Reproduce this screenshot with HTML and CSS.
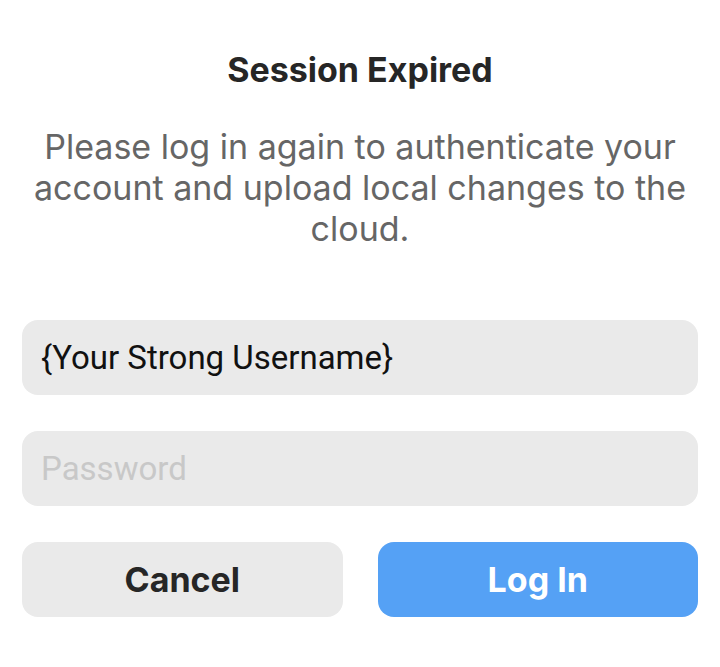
FILE: index.html
```html
<!DOCTYPE html>
<html lang="en">
<head>
    <meta charset="UTF-8">
    <meta name="viewport" content="width=device-width, initial-scale=1.0">
    <title>Session Expired</title>
    <link rel="stylesheet" href="styles.css">
</head>
<body>
    <div class="dialog">
        <h1 class="title">Session Expired</h1>
        <p class="message">Please log in again to authenticate your account and upload local changes to the cloud.</p>

        <form class="login-form">
            <input type="text" class="field" value="{Your Strong Username}">
            <input type="password" class="field" placeholder="Password">

            <div class="actions">
                <button type="button" class="btn btn-cancel">Cancel</button>
                <button type="submit" class="btn btn-login">Log In</button>
            </div>
        </form>
    </div>
</body>
</html>
```

FILE: styles.css
```css
body {
    background-color: #fff;
    margin: 0;
    padding: 0;
    font-family: Inter, "Noto Sans", sans-serif;
}

.dialog {
    padding: 48px 22px 0;
}

.title {
    margin: 0;
    text-align: center;
    font-size: 34px;
    font-weight: 700;
    color: #262626;
    line-height: 44px;
}

.message {
    margin: 34px 0 0;
    text-align: center;
    font-size: 34px;
    line-height: 41px;
    color: #666;
}

.login-form {
    margin-top: 71px;
    display: flex;
    flex-direction: column;
    gap: 36px;
}

.field {
    box-sizing: border-box;
    width: 100%;
    height: 75px;
    border: none;
    border-radius: 16px;
    background: #eaeaea;
    padding: 0 20px 0 19px;
    font-family: Roboto, "Noto Sans", sans-serif;
    font-size: 33px;
    color: #111;
    outline: none;
}

.field::placeholder {
    color: #c8c8c8;
}

.actions {
    display: flex;
    gap: 35px;
}

.btn {
    flex: 1;
    height: 75px;
    border: none;
    border-radius: 16px;
    font-family: Inter, "Noto Sans", sans-serif;
    font-size: 34px;
    font-weight: 700;
    cursor: pointer;
}

.btn-cancel {
    background: #eaeaea;
    color: #262626;
}

.btn-login {
    background: #55a1f5;
    color: #fff;
}
```
